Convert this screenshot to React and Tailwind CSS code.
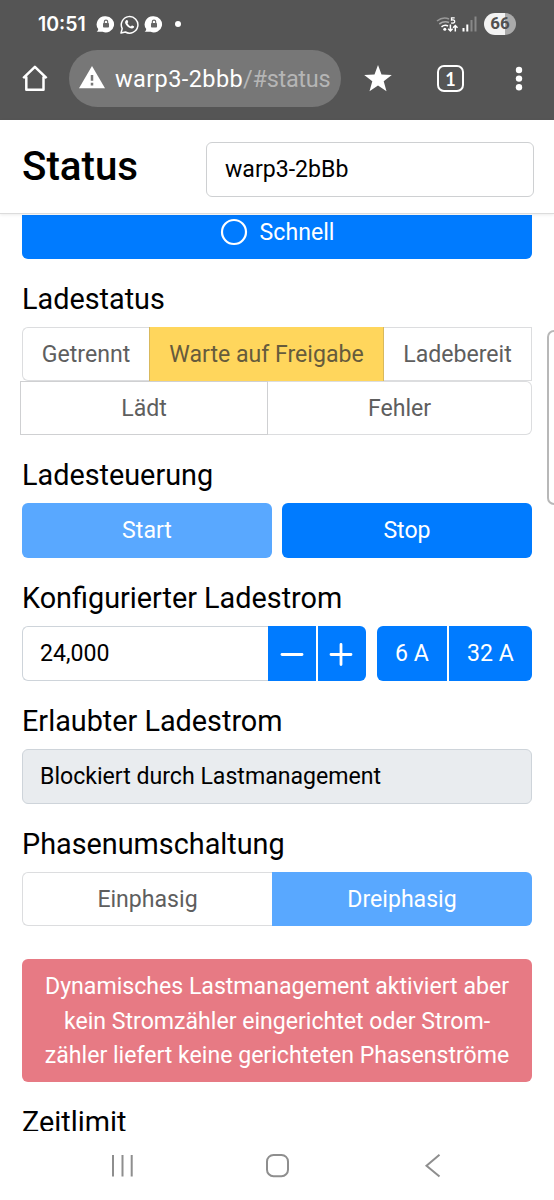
import React from "react";

function ChatLock() {
  return (
    <svg className="h-[17px] w-[19px] shrink-0" viewBox="0 0 19 17">
      <path d="M9.8 0.2a8.3 8.1 0 1 1-3.2 15.6H0.6c1.1-.6 1.6-1.5 1.6-2.7A8.2 8.2 0 0 1 9.8.2Z" fill="#fff" />
      <rect x="7" y="7" width="6" height="4.6" rx=".8" fill="#666" />
      <path d="M8.300 7.200V5.800a1.700 1.700 0 0 1 3.400 0v1.400" fill="none" stroke="#666" strokeWidth="1.100" />
    </svg>
  );
}

function WhatsApp() {
  return (
    <svg className="h-[19px] w-[19px] shrink-0" viewBox="0 0 19 19">
      <path d="M1 18l1.2-4.4A8.3 8.3 0 1 1 5.4 17Z" fill="none" stroke="#fff" strokeWidth="1.5" strokeLinejoin="round" />
      <path d="M6.2 5.2c.4-.4 1-.4 1.3.1l.7 1.5c.2.5-.4 1-.7 1.4.8 1.6 1.8 2.5 3.4 3.2.5-.5.9-1.1 1.4-.9l1.5.8c.5.3.3 1-.1 1.5-1 1-2.4.9-3.8.3-2-.9-3.6-2.5-4.5-4.4-.6-1.400-.3-2.500.8-3.500Z" fill="#fff" />
    </svg>
  );
}

function StatusBar() {
  return (
    <div className="flex h-[48px] items-center pl-[38px] pr-[38px] font-['Inter',sans-serif] text-white">
      <span className="w-[58px] pt-[2px] text-[19.500px] font-semibold">10:51</span>
      <ChatLock />
      <span className="ml-[5px] flex"><WhatsApp /></span>
      <span className="ml-[5px] flex"><ChatLock /></span>
      <span className="ml-[12px] h-[6px] w-[6px] rounded-full bg-white" />
      <svg className="ml-auto h-[17px] w-[23px]" viewBox="0 0 23 17">
        <g fill="none" strokeWidth="1.6">
          <path d="M1 5Q7 .2 13 3" stroke="#999" />
          <path d="M3.300 8Q8 4.400 13 6.500" stroke="#aaa" />
          <path d="M5.500 10.800Q8.800 8.200 12 10" stroke="#fff" />
          <path d="M14.400 8.500v6.500m-2.200-2.200 2.200 2.200 2.200-2.200M19.300 15.500V9.500m-2.200 2.200 2.200-2.200 2.200 2.200" stroke="#fff" strokeWidth="1.500" />
          <path d="M18.700 1.800h-3.200v2.300q3.200-.6 3.200 1.500 0 1.900-3.500 1.400" stroke="#fff" strokeWidth="1.300" />
        </g>
        <circle cx="8.800" cy="13.300" r="1.500" fill="#fff" />
      </svg>
      <svg className="ml-[3px] h-[16px] w-[15px]" viewBox="0 0 15 16">
        <path d="M1.500 12v3.500M5.300 8.500v7" stroke="#fff" strokeWidth="2" />
        <path d="M9.500 4v11.500M13.500 0.500v15" stroke="#888" strokeWidth="2" />
      </svg>
      <span className="ml-[7px] flex h-[22px] w-[32px] items-center justify-center rounded-full bg-linear-to-r from-[#f2f2f2] from-66% to-[#aaa] to-66% font-[Roboto,sans-serif] text-[17px] font-bold text-[#505050]">
        66
      </span>
    </div>
  );
}

function BrowserBar() {
  return (
    <div className="flex h-[72px] items-start pl-[21px] pt-[2px]">
      <svg className="mt-[14px] h-[28px] w-[28px]" viewBox="0 0 28 28">
        <path d="M2.200 14.200 13.900 2.800l11.700 11.400M5.300 12.500v13.200h17.200V12.500" fill="none" stroke="#fff" strokeWidth="2.500" strokeLinejoin="round" />
      </svg>
      <div className="ml-[20px] flex h-[57px] w-[272px] items-center rounded-full bg-[#777] pl-[10px]">
        <svg className="-mt-[3px] h-[24px] w-[26px]" viewBox="0 0 26 24">
          <path d="M13 1 26 23.200H0Z" fill="#fff" />
          <path d="M13 10v5.800M13 17.700v2.800" stroke="#777" strokeWidth="2.500" />
        </svg>
        <span className="ml-[10px] mt-[2px] whitespace-nowrap font-[Roboto,sans-serif] text-[23.500px] tracking-[0.400px] text-white">
          warp3-2bbb<span className="tracking-[-0.300px] text-[#b5b5b5]">/#status</span>
        </span>
      </div>
      <svg className="ml-[22px] mt-[14px] h-[30px] w-[30px]" viewBox="0 0 30 30">
        <path d="m15 1 3.500 9.600 10.300.4-8.100 6.300 2.800 9.900L15 21.500l-8.500 5.700 2.800-9.900L1.200 11l10.300-.4Z" fill="#fff" />
      </svg>
      <div className="ml-[44px] mt-[15px] flex h-[27px] w-[27px] items-center justify-center rounded-[7px] border-[2.500px] border-white">
        <span className="font-[Lato,sans-serif] text-[18px] font-bold leading-[20px] text-white">1</span>
      </div>
      <svg className="ml-[49px] mt-[14px] h-[30px] w-[12px]" viewBox="0 0 12 30" fill="#fff">
        <circle cx="6" cy="6" r="3.200" />
        <circle cx="6" cy="14.600" r="3.200" />
        <circle cx="6" cy="23.200" r="3.200" />
      </svg>
    </div>
  );
}

function Heading({ children }) {
  return (
    <h4 className="h-[68px] shrink-0 whitespace-nowrap pt-[24px] text-[28.800px] leading-[33px] text-black">{children}</h4>
  );
}

const cell = "flex items-center justify-center pt-[2px]";

export default function App() {
  return (
    <div className="relative flex h-[1200px] w-[554px] flex-col overflow-hidden bg-white font-[Roboto,sans-serif] text-[23.100px]">
      <div className="h-[120px] shrink-0 bg-[#555]">
        <StatusBar />
        <BrowserBar />
      </div>

      <header className="z-10 flex h-[94px] shrink-0 items-start justify-between border-b border-[#dcdcdc] pl-[22px] pr-[20px] pt-[22px] shadow-[0_1px_3px_rgba(0,0,0,0.08)]">
        <h1 className="pt-[2px] text-[40.300px] font-medium leading-[46px] text-black">Status</h1>
        <div className="flex h-[55px] w-[328px] items-center rounded-[6px] border border-[#ced0d2] pl-[18px] pt-[2px] text-black">warp3-2bBb</div>
      </header>

      <main className="flex min-h-0 flex-1 flex-col overflow-hidden pl-[22px] pr-[22px]">
        <div className="mt-px flex h-[44px] shrink-0 items-start justify-center rounded-b-[6px] bg-[#007bff] text-white">
          <svg className="mt-[3px] h-[28px] w-[28px]" viewBox="0 0 28 28">
            <circle cx="14" cy="14" r="12" fill="none" stroke="#fff" strokeWidth="2.200" />
          </svg>
          <span className="ml-[12px] leading-[36px]">Schnell</span>
        </div>

        <Heading>Ladestatus</Heading>
        <div className="h-[108px] shrink-0 text-[#5e5e5e]">
          <div className="flex h-[54px]">
            <div className={`${cell} w-[127px] rounded-l-[6px] border border-r-0 border-[#dcdddf]`}>Getrennt</div>
            <div className={`${cell} w-[235px] border-x border-[#d9b95c] bg-[#ffd65c] text-[#665b3c]`}>Warte auf Freigabe</div>
            <div className={`${cell} flex-1 border border-l-0 border-[#dcdddf]`}>Ladebereit</div>
          </div>
          <div className="-ml-[2px] flex h-[54px]">
            <div className={`${cell} w-[248px] border border-[#cfd0d2]`}>Lädt</div>
            <div className={`${cell} flex-1 rounded-r-[6px] border border-l-0 border-[#dcdddf]`}>Fehler</div>
          </div>
        </div>

        <Heading>Ladesteuerung</Heading>
        <div className="flex h-[55px] shrink-0 gap-[10px] text-white">
          <div className={`${cell} flex-1 rounded-[6px] bg-[#59a8ff]`}>Start</div>
          <div className={`${cell} flex-1 rounded-[6px] bg-[#007bff]`}>Stop</div>
        </div>

        <Heading>Konfigurierter Ladestrom</Heading>
        <div className="flex h-[55px] shrink-0 text-white">
          <div className="flex w-[246px] items-center rounded-l-[6px] border border-r-0 border-[#ced4da] pl-[17px] pt-px text-black">24,000</div>
          <div className="flex w-[48px] items-center justify-center bg-[#007bff]">
            <svg className="h-[24px] w-[24px]" viewBox="0 0 24 24" stroke="#fff" strokeWidth="2.800" strokeLinecap="round">
              <path d="M2 12.500h20" />
            </svg>
          </div>
          <div className="ml-[2px] flex w-[48px] items-center justify-center rounded-r-[6px] bg-[#007bff]">
            <svg className="-ml-[2px] h-[24px] w-[24px]" viewBox="0 0 24 24" stroke="#fff" strokeWidth="2.800" strokeLinecap="round">
              <path d="M2 12.500h20M12 2.500v20" />
            </svg>
          </div>
          <div className={`${cell} ml-[11px] w-[70px] rounded-l-[6px] bg-[#007bff]`}>6 A</div>
          <div className={`${cell} ml-[2px] flex-1 rounded-r-[6px] bg-[#007bff]`}>32 A</div>
        </div>

        <Heading>Erlaubter Ladestrom</Heading>
        <div className="flex h-[55px] shrink-0 items-center rounded-[6px] border border-[#ced4da] bg-[#e9ecef] pl-[17px] pt-px text-black">
          Blockiert durch Lastmanagement
        </div>

        <Heading>Phasenumschaltung</Heading>
        <div className="flex h-[54px] shrink-0">
          <div className={`${cell} w-[250px] rounded-l-[6px] border border-r-0 border-[#dcdddf] text-[#5e5e5e]`}>Einphasig</div>
          <div className={`${cell} flex-1 rounded-r-[6px] bg-[#59a8ff] text-white`}>Dreiphasig</div>
        </div>

        <div className="mt-[33px] h-[123px] shrink-0 whitespace-nowrap rounded-[6px] bg-[#e77a84] pt-[11px] text-center leading-[34.500px] text-white">
          Dynamisches Lastmanagement aktiviert aber
          <br />
          kein Stromzähler eingerichtet oder Strom-
          <br />
          zähler liefert keine gerichteten Phasenströme
        </div>

        <Heading>Zeitlimit</Heading>
      </main>

      <nav className="flex h-[69px] shrink-0 items-start bg-white pl-[110px] pt-[22px]">
        <svg className="h-[26px] w-[26px]" viewBox="0 0 26 26">
          <path d="M3 2v21.500M12.500 2v21.500M21.700 2v21.500" stroke="#8e8e8e" strokeWidth="2" />
        </svg>
        <svg className="ml-[129px] h-[26px] w-[26px]" viewBox="0 0 26 26">
          <rect x="2" y="2" width="21" height="21.200" rx="6.500" fill="none" stroke="#8e8e8e" strokeWidth="2" />
        </svg>
        <svg className="ml-[132px] h-[26px] w-[20px]" viewBox="0 0 20 26">
          <path d="M16.500 1.800 3.500 12.700l13 10.800" fill="none" stroke="#8e8e8e" strokeWidth="2" />
        </svg>
      </nav>

      <div className="absolute left-[547px] top-[330px] h-[175px] w-[20px] rounded-[7px] border-2 border-[#b8b8b8] bg-white" />
    </div>
  );
}
